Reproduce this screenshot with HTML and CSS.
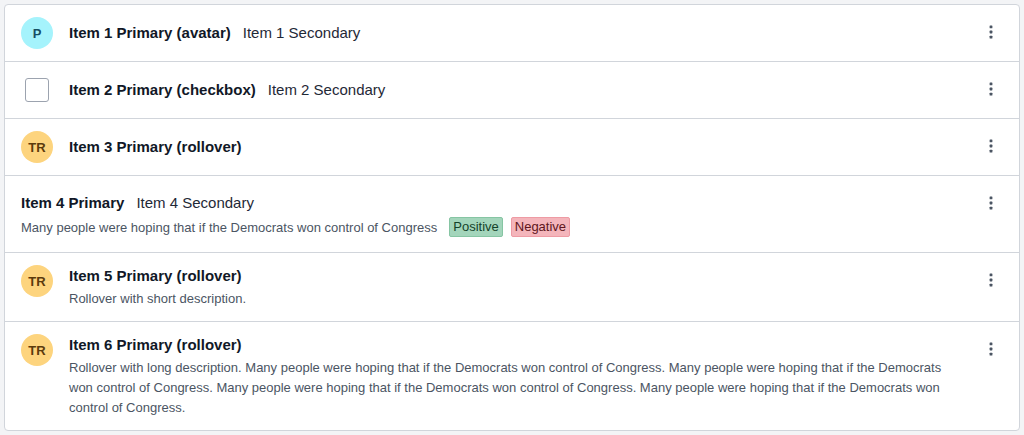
FILE: index.html
```html
<!DOCTYPE html>
<html>
<head>
<meta charset="utf-8">
<link rel="stylesheet" href="styles.css">
</head>
<body>
<ul class="list">
  <li class="item">
    <div class="lead"><span class="avatar avatar-cyan">P</span></div>
    <div class="content content-single">
      <div class="line"><span class="primary">Item 1 Primary (avatar)</span><span class="secondary">Item 1 Secondary</span></div>
    </div>
    <button class="kebab"><svg width="4" height="14" viewBox="0 0 4 14"><rect x="0.6" y="0.5" width="2.8" height="2.8" rx="0.6"/><rect x="0.6" y="5.6" width="2.8" height="2.8" rx="0.6"/><rect x="0.6" y="10.7" width="2.8" height="2.8" rx="0.6"/></svg></button>
  </li>
  <li class="item">
    <div class="lead"><span class="checkbox"></span></div>
    <div class="content content-single">
      <div class="line"><span class="primary">Item 2 Primary (checkbox)</span><span class="secondary">Item 2 Secondary</span></div>
    </div>
    <button class="kebab"><svg width="4" height="14" viewBox="0 0 4 14"><rect x="0.6" y="0.5" width="2.8" height="2.8" rx="0.6"/><rect x="0.6" y="5.6" width="2.8" height="2.8" rx="0.6"/><rect x="0.6" y="10.7" width="2.8" height="2.8" rx="0.6"/></svg></button>
  </li>
  <li class="item">
    <div class="lead"><span class="avatar avatar-amber">TR</span></div>
    <div class="content content-single">
      <div class="line"><span class="primary">Item 3 Primary (rollover)</span></div>
    </div>
    <button class="kebab"><svg width="4" height="14" viewBox="0 0 4 14"><rect x="0.6" y="0.5" width="2.8" height="2.8" rx="0.6"/><rect x="0.6" y="5.6" width="2.8" height="2.8" rx="0.6"/><rect x="0.6" y="10.7" width="2.8" height="2.8" rx="0.6"/></svg></button>
  </li>
  <li class="item item-plain">
    <div class="content content-plain">
      <div class="line"><span class="primary">Item 4 Primary</span><span class="secondary">Item 4 Secondary</span></div>
      <div class="desc-tags"><span class="desc-text">Many people were hoping that if the Democrats won control of Congress</span><span class="tag tag-pos">Positive</span><span class="tag tag-neg">Negative</span></div>
    </div>
    <button class="kebab"><svg width="4" height="14" viewBox="0 0 4 14"><rect x="0.6" y="0.5" width="2.8" height="2.8" rx="0.6"/><rect x="0.6" y="5.6" width="2.8" height="2.8" rx="0.6"/><rect x="0.6" y="10.7" width="2.8" height="2.8" rx="0.6"/></svg></button>
  </li>
  <li class="item">
    <div class="lead"><span class="avatar avatar-amber">TR</span></div>
    <div class="content">
      <div class="line"><span class="primary">Item 5 Primary (rollover)</span></div>
      <div class="desc">Rollover with short description.</div>
    </div>
    <button class="kebab"><svg width="4" height="14" viewBox="0 0 4 14"><rect x="0.6" y="0.5" width="2.8" height="2.8" rx="0.6"/><rect x="0.6" y="5.6" width="2.8" height="2.8" rx="0.6"/><rect x="0.6" y="10.7" width="2.8" height="2.8" rx="0.6"/></svg></button>
  </li>
  <li class="item">
    <div class="lead"><span class="avatar avatar-amber">TR</span></div>
    <div class="content">
      <div class="line"><span class="primary">Item 6 Primary (rollover)</span></div>
      <div class="desc">Rollover with long description. Many people were hoping that if the Democrats won control of Congress. Many people were hoping that if the Democrats won control of Congress. Many people were hoping that if the Democrats won control of Congress. Many people were hoping that if the Democrats won control of Congress.</div>
    </div>
    <button class="kebab"><svg width="4" height="14" viewBox="0 0 4 14"><rect x="0.6" y="0.5" width="2.8" height="2.8" rx="0.6"/><rect x="0.6" y="5.6" width="2.8" height="2.8" rx="0.6"/><rect x="0.6" y="10.7" width="2.8" height="2.8" rx="0.6"/></svg></button>
  </li>
</ul>
</body>
</html>
```
FILE: styles.css
```css
html, body {
  margin: 0;
  background: #f3f4f6;
}
body {
  padding: 4px;
  font-family: "Liberation Sans", Arial, sans-serif;
  color: #111827;
}
.list {
  list-style: none;
  margin: 0;
  padding: 0;
  background: #fff;
  border: 1px solid #d1d5db;
  border-radius: 4px;
}
.item {
  display: flex;
  align-items: flex-start;
  padding: 12px 16px;
  border-bottom: 1px solid #d1d5db;
}
.item:last-child {
  border-bottom: none;
}
.lead {
  width: 32px;
  height: 32px;
  flex: none;
  margin-right: 16px;
  display: flex;
  align-items: center;
  justify-content: center;
}
.avatar {
  width: 32px;
  height: 32px;
  border-radius: 50%;
  display: flex;
  align-items: center;
  justify-content: center;
  font-size: 13px;
  font-weight: bold;
}
.avatar-cyan {
  background: #a5f3fc;
  color: #164e63;
}
.avatar-amber {
  background: #fdd47e;
  color: #5b3a0c;
}
.checkbox {
  width: 22px;
  height: 22px;
  border: 1px solid #9ca3af;
  border-radius: 3px;
  background: #fff;
}
.content {
  flex: 1;
  min-width: 0;
}
.content-single {
  padding-top: 5px;
}
.content-plain {
  padding-top: 4px;
}
.line {
  display: flex;
  align-items: baseline;
  gap: 12px;
  line-height: 22px;
  font-size: 15px;
}
.primary {
  font-weight: bold;
  color: #111827;
}
.secondary {
  color: #1f2937;
}
.desc {
  margin-top: 2px;
  font-size: 13px;
  line-height: 20px;
  color: #4b5563;
}
.desc-tags {
  display: flex;
  align-items: center;
  height: 26px;
  font-size: 13px;
  color: #4b5563;
}
.desc-text {
  margin-right: 12px;
}
.tag {
  display: inline-block;
  height: 18px;
  line-height: 18px;
  padding: 0 3px;
  border-radius: 2px;
  font-size: 13px;
}
.tag-pos {
  background: #a3d5bb;
  border: 1px solid #86c5a3;
  color: #14432a;
  margin-right: 8px;
}
.tag-neg {
  background: #f4b5bb;
  border: 1px solid #ee9ba4;
  color: #5f1620;
}
.kebab {
  flex: none;
  width: 24px;
  height: 30px;
  margin-left: 16px;
  padding: 0;
  border: none;
  background: transparent;
  display: flex;
  align-items: center;
  justify-content: center;
  fill: #4b5563;
}
```
